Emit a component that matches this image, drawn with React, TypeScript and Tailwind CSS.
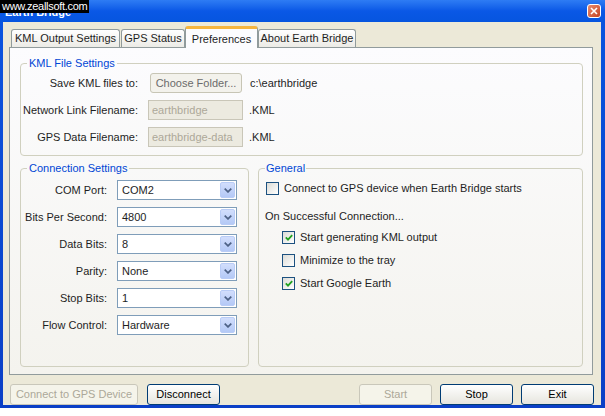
import React from 'react';

type TabProps = { label: string; w: string; selected?: boolean };

const Tab = ({ label, w, selected }: TabProps) =>
  selected ? (
    <div
      className={`${w} relative z-10 h-[22px] -mb-px flex items-start justify-center pt-[2px] rounded-t-[3px] border-x border-[#919B9C] border-t-[3px] border-t-[#F5B53F] bg-[#FCFCFE] text-[11px]`}
    >
      {label}
    </div>
  ) : (
    <div
      className={`${w} h-[18px] flex items-center justify-center rounded-t-[3px] border-x border-t border-[#919B9C] bg-gradient-to-b from-white to-[#ECEBE6] text-[11px]`}
    >
      {label}
    </div>
  );

type BtnProps = { label: string; w: string; disabled?: boolean; extra?: string };

const Btn = ({ label, w, disabled, extra = '' }: BtnProps) => (
  <div
    className={`${w} ${extra} h-[21px] flex items-center justify-center rounded-[3px] border text-[11px] ${
      disabled
        ? 'border-[#C9C7BA] bg-[#F5F4EA] text-[#ACA899]'
        : 'border-[#003C74] bg-gradient-to-b from-white to-[#E6E5DE] text-black'
    }`}
  >
    {label}
  </div>
);

const Select = ({ value }: { value: string }) => (
  <div className="w-[120px] h-[20px] border border-[#7F9DB9] bg-white flex items-center pl-[4px] pr-px">
    <span className="flex-1 text-[11px] leading-none">{value}</span>
    <div className="w-[15px] h-[16px] rounded-[2px] border border-[#B9CCF6] bg-gradient-to-b from-[#D2DEFC] to-[#B4C9F6] flex items-center justify-center">
      <svg width="8" height="5" viewBox="0 0 8 5">
        <path d="M0.7 0.7 L4 3.9 L7.3 0.7" fill="none" stroke="#4D6185" strokeWidth="1.7" />
      </svg>
    </div>
  </div>
);

const Check = ({ label, checked, extra = '' }: { label: string; checked?: boolean; extra?: string }) => (
  <div className={`flex items-center h-[17px] gap-[5px] ${extra}`}>
    <div className="w-[13px] h-[13px] border border-[#1C5180] bg-gradient-to-br from-[#DCDCD7] to-white flex items-center justify-center">
      {checked && (
        <svg width="8" height="7" viewBox="0 0 8 7">
          <path d="M0.8 3.4 L3 5.6 L7.2 1.2" fill="none" stroke="#21A121" strokeWidth="1.8" />
        </svg>
      )}
    </div>
    <span>{label}</span>
  </div>
);

const FileRow = ({ label, children }: { label: string; children: React.ReactNode }) => (
  <div className="flex items-center h-[20px]">
    <span className="w-[117px] text-right whitespace-nowrap">{label}</span>
    <div className="ml-[10px] flex items-center">{children}</div>
  </div>
);

const DisabledInput = ({ value }: { value: string }) => (
  <div className="w-[95px] h-[20px] border border-[#C9C6B8] bg-[#ECEAE0] text-[#ACA899] flex items-center pl-[3px]">
    {value}
  </div>
);

const connRows = [
  ['COM Port:', 'COM2'],
  ['Bits Per Second:', '4800'],
  ['Data Bits:', '8'],
  ['Parity:', 'None'],
  ['Stop Bits:', '1'],
  ['Flow Control:', 'Hardware'],
];

export default function App() {
  return (
    <div className="w-[605px] h-[416px] bg-white font-['Liberation_Sans',Arial,sans-serif] text-[11px] text-[#1E1E1E]">
      <div className="relative w-[605px] h-[408px] bg-gradient-to-b from-[#0A55E0] to-[#0B3FC6] flex flex-col">
        {/* title bar */}
        <div className="h-[22px] bg-gradient-to-b from-[#2E7CF4] via-[#0A58E6] to-[#0655DF] flex items-center justify-between pl-[5px] pr-[4px]">
          <span className="text-white font-bold text-[11px] leading-none pt-[3px]">Earth Bridge</span>
          <div className="w-[14px] h-[14px] rounded-[3px] border border-white bg-gradient-to-br from-[#E98A6E] to-[#C4431F] flex items-center justify-center">
            <svg width="8" height="8" viewBox="0 0 8 8">
              <path d="M1 1 L7 7 M7 1 L1 7" stroke="white" strokeWidth="1.6" />
            </svg>
          </div>
        </div>

        {/* window body */}
        <div className="flex-1 ml-[3px] mr-[4px] mb-[3px] bg-[#ECE9D8] flex flex-col">
          <div className="flex items-end h-[21px] mt-[4px] pl-[8px]">
            <Tab label="KML Output Settings" w="w-[109px]" />
            <div className="w-px" />
            <Tab label="GPS Status" w="w-[64px]" />
            <Tab label="Preferences" w="w-[73px]" selected />
            <Tab label="About Earth Bridge" w="w-[98px]" />
          </div>

          <div className="ml-[6px] mr-[8px] h-[328px] border border-[#919B9C] bg-gradient-to-b from-[#FCFCFE] to-[#F4F3EE] flex flex-col pt-[9px] pl-[10px] pr-[9px] pb-[7px]">
            <fieldset className="border border-[#D0D0BF] rounded-[4px] pb-[8px]">
              <legend className="ml-[6px] px-[2px] text-[#0046D5] leading-[13px]">KML File Settings</legend>
              <div className="flex flex-col gap-[7px] mt-[3px]">
                <FileRow label="Save KML files to:">
                  <div className="ml-[2px] w-[92px] h-[20px] rounded-[3px] border border-[#C7C5B5] bg-[#F3F2EC] text-[#6B6B6B] flex items-center justify-center">
                    Choose Folder...
                  </div>
                  <span className="ml-[8px]">{'c:\\earthbridge'}</span>
                </FileRow>
                <FileRow label="Network Link Filename:">
                  <DisabledInput value="earthbridge" />
                  <span className="ml-[6px]">.KML</span>
                </FileRow>
                <FileRow label="GPS Data Filename:">
                  <DisabledInput value="earthbridge-data" />
                  <span className="ml-[6px]">.KML</span>
                </FileRow>
              </div>
            </fieldset>

            <div className="flex-1 flex gap-[9px] mt-[6px]">
              <fieldset className="w-[229px] border border-[#D0D0BF] rounded-[4px]">
                <legend className="ml-[6px] px-[2px] text-[#0046D5] leading-[13px]">Connection Settings</legend>
                <div className="flex flex-col gap-[7px] mt-[5px]">
                  {connRows.map(([label, value]) => (
                    <div key={label} className="flex items-center h-[20px]">
                      <span className="w-[86px] text-right whitespace-nowrap">{label}</span>
                      <div className="ml-[10px]">
                        <Select value={value} />
                      </div>
                    </div>
                  ))}
                </div>
              </fieldset>

              <fieldset className="flex-1 border border-[#D0D0BF] rounded-[4px] pl-[6px]">
                <legend className="ml-0 px-[1px] text-[#0046D5] leading-[13px]">General</legend>
                <div className="flex flex-col mt-[5px]">
                  <Check label="Connect to GPS device when Earth Bridge starts" extra="ml-px" />
                  <div className="h-[17px] flex items-center mt-[11px]">On Successful Connection...</div>
                  <Check label="Start generating KML output" checked extra="ml-[17px] mt-[4px]" />
                  <Check label="Minimize to the tray" extra="ml-[17px] mt-[6px]" />
                  <Check label="Start Google Earth" checked extra="ml-[17px] mt-[6px]" />
                </div>
              </fieldset>
            </div>
          </div>

          <div className="flex justify-between mt-[9px] pl-[7px] pr-[7px]">
            <div className="flex">
              <Btn label="Connect to GPS Device" w="w-[128px]" disabled />
              <Btn label="Disconnect" w="w-[73px]" extra="ml-[9px]" />
            </div>
            <div className="flex">
              <Btn label="Start" w="w-[73px]" disabled />
              <Btn label="Stop" w="w-[73px]" extra="ml-[8px]" />
              <Btn label="Exit" w="w-[73px]" extra="ml-[8px]" />
            </div>
          </div>
        </div>

        <div className="absolute left-0 top-0 w-[89px] h-[13px] bg-black text-white text-[11px] leading-[13px] tracking-[-0.3px] pl-[2px]">
          www.zeallsoft.com
        </div>
      </div>
    </div>
  );
}
